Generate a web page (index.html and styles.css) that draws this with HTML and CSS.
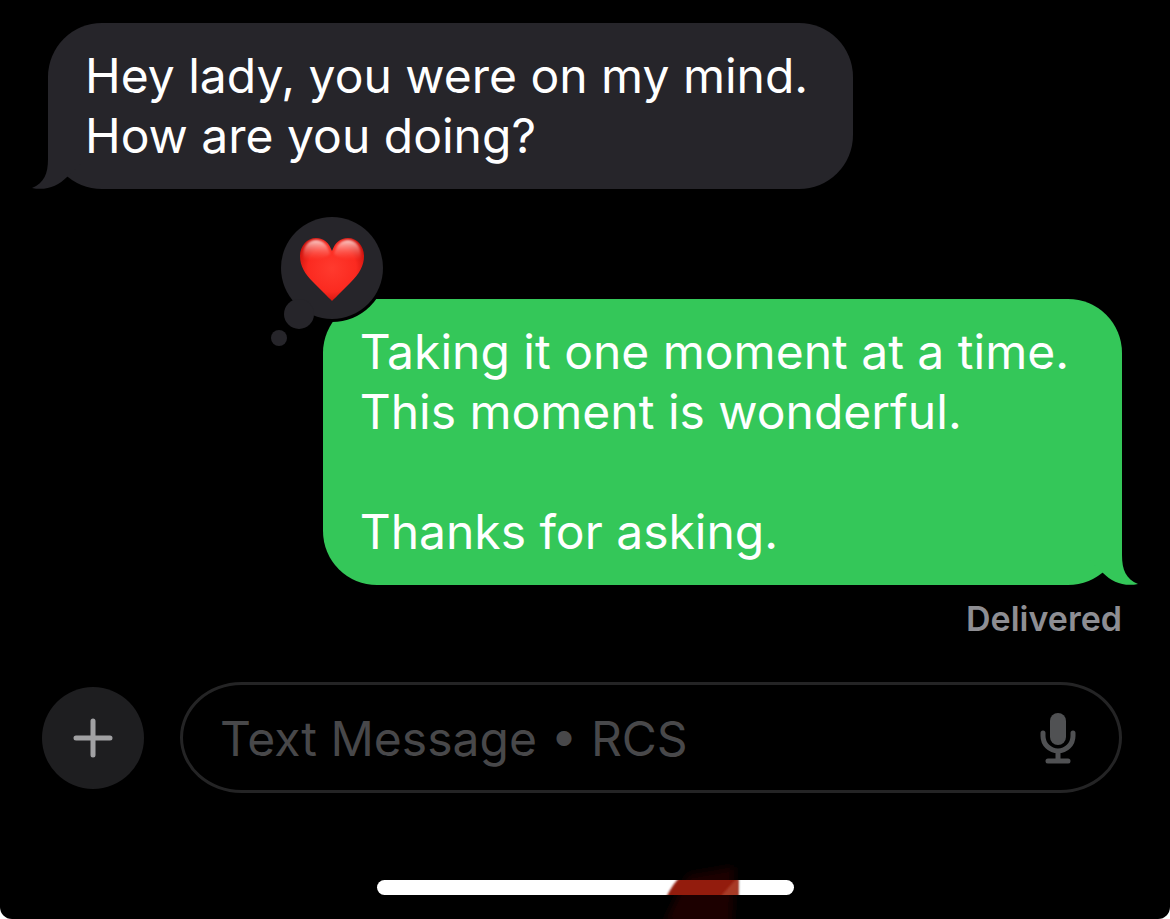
FILE: index.html
```html
<!DOCTYPE html>
<html lang="en">
<head>
  <meta charset="UTF-8" />
  <meta name="viewport" content="width=device-width, initial-scale=1.0" />
  <title>Messages</title>
  <link rel="stylesheet" href="styles.css">
</head>
<body>
  <div class="screen">
    <main class="thread">
      <div class="bubble received">
        <p>Hey lady, you were on my mind.<br>How are you doing?</p>
        <svg class="tail" viewBox="0 0 54 60" aria-hidden="true">
          <path d="M16 0V30C16 45 12 54 0 59C14 62 26 57 35 48L54 30V0Z" />
        </svg>
      </div>

      <div class="bubble sent">
        <p>Taking it one moment at a time.<br>This moment is wonderful.<br><br>Thanks for asking.</p>
        <svg class="tail" viewBox="0 0 54 60" aria-hidden="true">
          <path d="M16 0V30C16 45 12 54 0 59C14 62 26 57 35 48L54 30V0Z" />
        </svg>
        <svg class="reaction" viewBox="0 0 120 136" role="img" aria-label="Loved">
          <defs>
            <radialGradient id="heart" cx="50%" cy="48%" r="58%">
              <stop offset="0" stop-color="#ff3a2e" />
              <stop offset="0.65" stop-color="#fb2a20" />
              <stop offset="1" stop-color="#c90f0a" />
            </radialGradient>
            <linearGradient id="shine" x1="0" y1="0" x2="0" y2="1">
              <stop offset="0" stop-color="#ffe4e0" stop-opacity="0.9" />
              <stop offset="1" stop-color="#ff6a60" stop-opacity="0" />
            </linearGradient>
            <filter id="glow"><feGaussianBlur stdDeviation="1" /></filter>
          </defs>
          <circle cx="64" cy="55" r="54" fill="#000" />
          <g fill="#26252a">
            <circle cx="64" cy="55" r="51" />
            <circle cx="31" cy="101" r="15" />
            <circle cx="11" cy="125" r="8" />
          </g>
          <path fill="url(#heart)" d="M64 88C62 86 59 83 56 80L45 69C37 61 32 53 32 43C32 33 39 25 48 25C56 25 61 30 64 38C67 30 72 25 80 25C89 25 96 33 96 43C96 53 91 61 83 69L72 80C69 83 66 86 64 88Z" />
          <g fill="url(#shine)" filter="url(#glow)">
            <path d="M36 47C33 35 40 27 48 27C55 27 60 32 62 41C57 46 43 47 36 47Z" />
            <path d="M92 47C95 35 88 27 80 27C73 27 68 32 66 41C71 46 85 47 92 47Z" />
          </g>
        </svg>
      </div>

      <p class="status">Delivered</p>
    </main>

    <form class="composer">
      <button class="add" type="button" aria-label="Add">
        <svg viewBox="0 0 40 40"><path d="M20 3V37M3 20H37" /></svg>
      </button>
      <div class="field">
        <input type="text" aria-label="Message" placeholder="Text Message • RCS">
        <button class="mic" type="button" aria-label="Dictate">
          <svg viewBox="0 0 36 52">
            <rect x="10" y="1" width="16" height="32" rx="8" />
            <path d="M3 21V24A15 15 0 0 0 33 24V21M18 39V48M8 49H28" />
          </svg>
        </button>
      </div>
    </form>

    <div class="home">
      <div class="bar"></div>
      <svg class="smudge" viewBox="0 0 90 56" aria-hidden="true">
        <defs>
          <filter id="soft"><feGaussianBlur stdDeviation="4" /></filter>
          <filter id="edge"><feGaussianBlur stdDeviation="1" /></filter>
          <clipPath id="strip"><rect y="17" width="90" height="15" /></clipPath>
        </defs>
        <path d="M28 12L74 4L72 60H4Z" fill="#1f0202" filter="url(#soft)" />
        <g clip-path="url(#strip)">
          <path d="M20 10H78V40H4Q10 24 20 14Z" fill="#931a0c" filter="url(#edge)" />
          <path d="M76 16H78V34H60Z" fill="#a83a28" filter="url(#edge)" />
        </g>
      </svg>
    </div>
  </div>
</body>
</html>
```

FILE: styles.css
```css
* {
  box-sizing: border-box;
}
body {
  margin: 0;
  background: #fff;
  font-family: Inter, "Liberation Sans", sans-serif;
}
p {
  margin: 0;
}
.screen {
  display: flex;
  flex-direction: column;
  min-height: 100vh;
  padding: 23px 48px 0;
  background: #000;
  border-radius: 0 0 12px 12px;
  overflow: hidden;
}

/* conversation */
.thread {
  display: flex;
  flex-direction: column;
}
.bubble {
  position: relative;
  padding: 23px 45px 23px 37px;
  border-radius: 54px;
  color: #fff;
  font-size: 48px;
  line-height: 60px;
}
.received {
  align-self: flex-start;
  background: #26252a;
}
.sent {
  align-self: flex-end;
  margin-top: 110px;
  padding-right: 53px;
  background: #34c759;
}
.tail {
  position: absolute;
  left: -16px;
  bottom: 0;
  width: 54px;
  height: 60px;
  fill: #26252a;
}
.sent .tail {
  left: auto;
  right: -16px;
  fill: #34c759;
  transform: scaleX(-1);
}
.reaction {
  position: absolute;
  left: -55px;
  top: -86px;
  width: 120px;
  height: 136px;
}
.status {
  align-self: flex-end;
  margin-top: 14px;
  color: #8e8e93;
  font-size: 34px;
  font-weight: 600;
  line-height: 40px;
}

/* message box */
.composer {
  display: flex;
  align-items: center;
  gap: 36px;
  margin: 43px 0 0 -6px;
}
button {
  display: grid;
  place-items: center;
  flex: none;
  padding: 0;
  border: 0;
  background: none;
}
svg path {
  stroke-linecap: round;
}
.add {
  width: 102px;
  height: 102px;
  border-radius: 50%;
  background: #1e1e20;
}
.add svg {
  width: 40px;
  height: 40px;
  stroke: #a1a1a3;
  stroke-width: 5;
}
.field {
  display: flex;
  flex: 1;
  align-items: center;
  height: 111px;
  padding: 0 43px 0 37px;
  border: 3px solid #242425;
  border-radius: 62px / 56px;
}
.field input {
  flex: 1;
  min-width: 0;
  padding: 2px 0 0;
  border: 0;
  outline: 0;
  background: none;
  color: #fff;
  font: inherit;
  font-size: 48px;
  line-height: 60px;
}
.field input::placeholder {
  color: #48484a;
  opacity: 1;
}
.mic svg {
  width: 36px;
  height: 52px;
  fill: #505153;
}
.mic path {
  fill: none;
  stroke: #505153;
  stroke-width: 5;
}

/* home indicator */
.home {
  position: relative;
  width: 417px;
  margin: auto auto 0;
  padding-bottom: 24px;
}
.bar {
  height: 15px;
  border-radius: 8px;
  background: #fff;
}
.smudge {
  position: absolute;
  left: 283px;
  bottom: 0;
  width: 90px;
  height: 56px;
}
```
